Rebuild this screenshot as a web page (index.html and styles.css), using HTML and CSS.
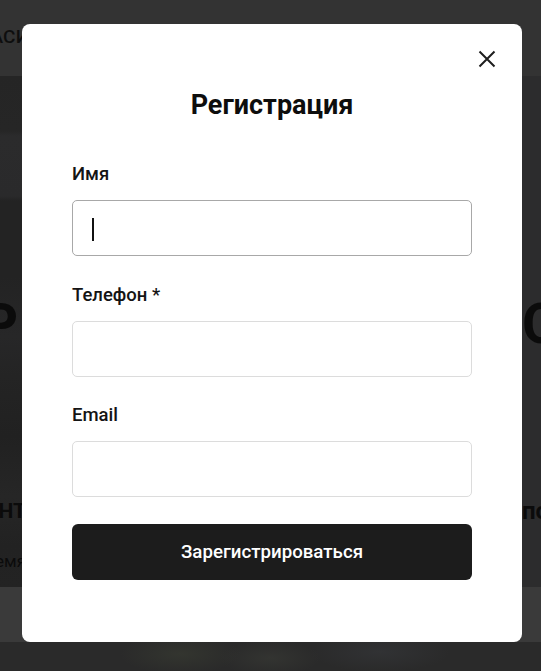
FILE: index.html
```html
<!DOCTYPE html>
<html lang="ru">
<head>
<meta charset="utf-8">
<title>Регистрация</title>
<link rel="stylesheet" href="styles.css">
</head>
<body>
<div class="page">
  <header class="site-header">
    <nav class="nav">
      <span class="nav-item nav-left">ФАНТАСИЯ</span>
      <span class="nav-item nav-right">СВЯЗЬ</span>
    </nav>
  </header>
  <section class="hero">
    <div class="hero-grid">
      <div class="hero-col hero-col-left">
        <div class="hero-big">ШОУ ПР</div>
        <div class="hero-sub">МОМЕНТ</div>
        <div class="hero-small">время</div>
      </div>
      <div class="hero-col hero-col-mid"></div>
      <div class="hero-col hero-col-right">
        <div class="hero-big">ОУ</div>
        <div class="hero-sub">по</div>
      </div>
    </div>
  </section>
  <section class="strip"></section>
  <section class="photo"></section>
</div>

<div class="overlay">
  <div class="modal" role="dialog" aria-labelledby="modal-title">
    <button class="close" type="button" aria-label="Закрыть">
      <svg width="18" height="18" viewBox="0 0 18 18" fill="none" stroke="#1e1e1e" stroke-width="2" stroke-linecap="butt">
        <path d="M1.5 1.5 L16.5 16.5 M16.5 1.5 L1.5 16.5"/>
      </svg>
    </button>
    <h2 class="modal-title" id="modal-title">Регистрация</h2>
    <form class="form">
      <div class="field">
        <label class="label" for="name">Имя</label>
        <div class="input-wrap">
          <input class="input input-focused" id="name" type="text">
          <span class="caret"></span>
        </div>
      </div>
      <div class="field">
        <label class="label" for="phone">Телефон *</label>
        <input class="input" id="phone" type="tel">
      </div>
      <div class="field field-last">
        <label class="label" for="email">Email</label>
        <input class="input" id="email" type="email">
      </div>
      <button class="submit" type="button">Зарегистрироваться</button>
    </form>
  </div>
</div>
</body>
</html>
```
FILE: styles.css
```css
* {
  box-sizing: border-box;
}

html, body {
  margin: 0;
  padding: 0;
}

body {
  font-family: Roboto, "Noto Sans", "Liberation Sans", sans-serif;
  background: #2a2a2a;
  overflow: hidden;
}

/* ---------- background page (dimmed) ---------- */
.page {
  width: 541px;
  height: 671px;
  overflow: hidden;
}

.site-header {
  height: 76px;
  background: #333333;
  overflow: hidden;
}

.nav {
  display: flex;
  justify-content: space-between;
  align-items: center;
  height: 100%;
  margin: 0 -90px 0 -62px;
}

.nav-item {
  font-size: 19px;
  font-weight: 500;
  color: #0e0e0e;
  letter-spacing: 0.2px;
  padding-bottom: 4px;
}

.hero {
  height: 511px;
  background:
    linear-gradient(180deg,
      #252525 0px, #262626 55px, #2b2b2c 60px, #2a2a2b 120px,
      #232323 125px, #232323 200px, #272728 260px, #242424 300px,
      #212121 360px, #262626 420px, #222222 470px, #232323 511px);
  overflow: hidden;
}

.hero-grid {
  display: grid;
  grid-template-columns: 104px 498px 120px;
  margin-left: -80px;
  height: 100%;
}

.hero-col {
  display: flex;
  flex-direction: column;
  padding-top: 220px;
  white-space: nowrap;
  color: #0b0b0b;
}

.hero-col-left {
  align-items: flex-end;
  overflow: hidden;
}

.hero-col-right {
  align-items: flex-start;
  background: #2c2c2d;
}

.hero-big {
  font-size: 56px;
  line-height: 56px;
  font-weight: 700;
  margin-right: 6px;
}

.hero-col-right .hero-big {
  margin-right: 0;
}

.hero-sub {
  margin-top: 147px;
  font-size: 21px;
  line-height: 24px;
  font-weight: 700;
  margin-right: -2px;
}

.hero-col-right .hero-sub {
  margin-right: 0;
  font-size: 24px;
}

.hero-small {
  margin-top: 28px;
  font-size: 17px;
  line-height: 20px;
  font-weight: 400;
  margin-right: -2px;
}

.strip {
  height: 55px;
  background: #3a3a3a;
}

.photo {
  height: 29px;
  background:
    radial-gradient(ellipse 60px 20px at 180px 12px, #33352f 0%, rgba(51,53,47,0) 100%),
    radial-gradient(ellipse 50px 18px at 270px 16px, #333431 0%, rgba(51,52,49,0) 100%),
    radial-gradient(ellipse 70px 20px at 380px 10px, #313234 0%, rgba(49,50,52,0) 100%),
    #2a2a2a;
}

/* ---------- modal ---------- */
.overlay {
  position: fixed;
  inset: 0;
  display: flex;
  align-items: flex-start;
  justify-content: flex-start;
  padding: 24px 0 0 22px;
}

.modal {
  position: relative;
  width: 500px;
  height: 618px;
  background: #ffffff;
  border-radius: 8px;
  padding: 66px 50px 0 50px;
}

.close {
  position: absolute;
  top: 26px;
  right: 26px;
  width: 18px;
  height: 18px;
  padding: 0;
  border: 0;
  background: transparent;
  display: flex;
  align-items: center;
  justify-content: center;
  cursor: pointer;
}

.close svg {
  display: block;
}

.modal-title {
  margin: 0;
  font-size: 27px;
  line-height: 31px;
  font-weight: 700;
  color: #0d0d0d;
  text-align: center;
}

.form {
  display: flex;
  flex-direction: column;
  gap: 29px;
  margin-top: 43px;
}

.field {
  display: flex;
  flex-direction: column;
  gap: 15px;
}

.field-last {
  margin-top: -1px;
}

.label {
  font-size: 18.5px;
  line-height: 21px;
  font-weight: 500;
  color: #141414;
}

.input-wrap {
  position: relative;
}

.input {
  display: block;
  width: 100%;
  height: 56px;
  padding: 0 20px;
  border: 1px solid #dcdcdc;
  border-radius: 5px;
  background: #ffffff;
  font-family: inherit;
  font-size: 18px;
  color: #111;
  outline: none;
}

.input-focused {
  border-color: #a8a8a8;
}

.caret {
  position: absolute;
  left: 20px;
  top: 18px;
  width: 1.5px;
  height: 23px;
  background: #111;
}

.submit {
  margin-top: -2px;
  height: 56px;
  width: 100%;
  border: 0;
  border-radius: 6px;
  background: #1c1c1c;
  color: #ffffff;
  font-family: inherit;
  font-size: 18.7px;
  font-weight: 500;
  cursor: pointer;
}
```
